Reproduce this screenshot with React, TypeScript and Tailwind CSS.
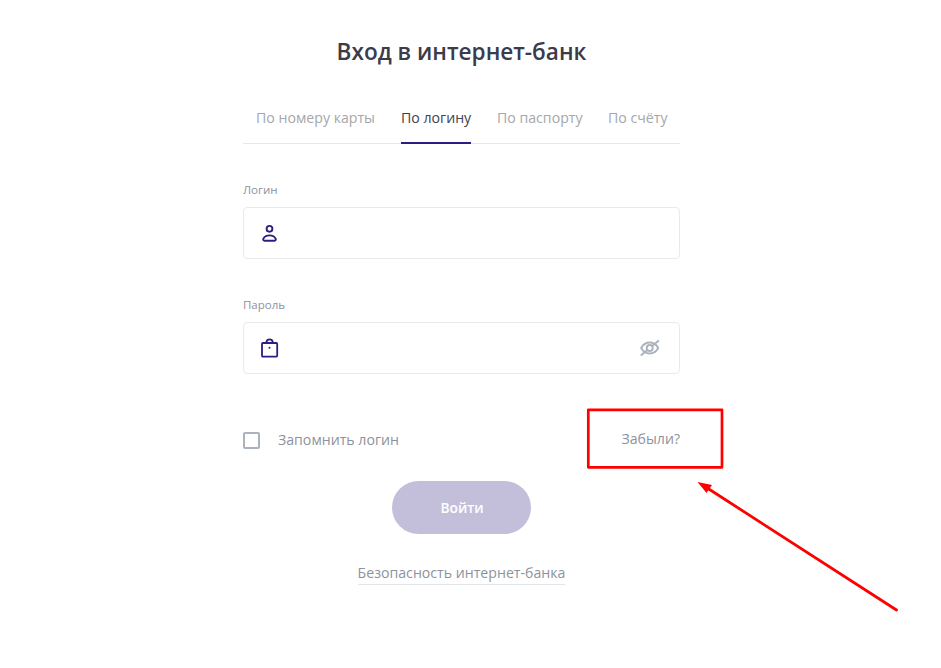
const tabs = [
  { label: "По номеру карты", width: "w-[119px]", active: false },
  { label: "По логину", width: "w-[70px]", active: true },
  { label: "По паспорту", width: "w-[85px]", active: false },
  { label: "По счёту", width: "w-[60px]", active: false },
];

function UserIcon() {
  return (
    <svg width="18" height="20" viewBox="0 0 18 20" fill="none" stroke="#2f1c80" strokeWidth="1.9">
      <circle cx="8.500" cy="5.800" r="2.900" />
      <path d="M3.600 17.700h9.800c1.300 0 1.700-.9 1.200-2-.9-2-3.200-3.300-6.100-3.300s-5.200 1.300-6.100 3.300c-.5 1.100-.1 2 1.200 2Z" strokeLinejoin="round" />
    </svg>
  );
}

function BagIcon() {
  return (
    <svg width="18" height="20" viewBox="0 0 18 20" fill="none" stroke="#2f1c80" strokeWidth="1.8">
      <rect x="1" y="5" width="15.200" height="13.700" rx="0.9" />
      <path d="M5.500 5V3.800C5.800 2.100 7 1.300 8.600 1.300s2.800.8 3.100 2.500V5" />
      <circle cx="8.500" cy="9.700" r="1" fill="#2f1c80" stroke="none" />
    </svg>
  );
}

function EyeIcon() {
  return (
    <svg width="20" height="18" viewBox="0 0 20 18" fill="none" stroke="#aab3bd" strokeWidth="1.9">
      <path d="M1.200 9C3 5.700 6 3.500 9.700 3.500S16.400 5.700 18.200 9c-1.800 3.300-4.800 5.500-8.500 5.500S3 12.300 1.200 9Z" />
      <circle cx="9.700" cy="9" r="3" />
      <path d="M.8 16.500 7.600 10.800M11.900 7.200 18.800 1.400" />
    </svg>
  );
}

export default function App() {
  return (
    <div className="relative h-[668px] w-[941px] overflow-hidden bg-white font-['Open_Sans',sans-serif] text-[#8d939c]">
      <main className="ml-[243px] flex w-[437px] flex-col pt-[36px]">
        <h1 className="text-center text-[22.600px] leading-8 font-semibold whitespace-nowrap text-[#3b3b49]">Вход в интернет-банк</h1>
        <nav className="mt-[32px] flex h-[44px] gap-[26px] border-b border-[#e7e8ec] pl-[13px] text-[14.150px] leading-9">
          {tabs.map((t) => (
            <span key={t.label} className={`${t.width} shrink-0 whitespace-nowrap ${t.active ? "h-[44px] border-b-2 border-[#2f1c80] text-[#41414d]" : "text-[#a5a7ab]"}`}>{t.label}</span>
          ))}
        </nav>
        <label className="mt-[38px] text-[11.500px] leading-4">Логин</label>
        <div className="mt-[9px] flex h-[52px] items-center rounded-[4px] border border-[#e9eaed] pl-[17px]"><UserIcon /></div>
        <label className="mt-[38px] text-[11.500px] leading-4">Пароль</label>
        <div className="mt-[9px] flex h-[52px] items-center justify-between rounded-[4px] border border-[#e9eaed] pr-[19px] pl-[17px]"><BagIcon /><EyeIcon /></div>
        <div className="mt-[54px] flex h-[24px] items-center text-[14.150px]">
          <span className="h-[17px] w-[17px] rounded-[2px] border-2 border-[#aab3bd]" />
          <span className="ml-[18px]">Запомнить логин</span>
          <span className="mb-[2px] ml-auto">Забыли?</span>
        </div>
        <button className="mt-[29px] h-[53px] w-[139px] self-center rounded-full bg-[#c3bfdb] pt-[2px] pl-[1px] text-[13.700px] font-semibold text-white">Войти</button>
        <a className="mt-[27px] h-[24px] self-center border-b border-[#e2e4e8] text-[14.150px] leading-6 whitespace-nowrap">Безопасность интернет-банка</a>
      </main>
      <svg className="pointer-events-none absolute inset-0" width="941" height="668" fill="none" stroke="#ff0000">
        <rect x="588.300" y="409.800" width="133.700" height="57.500" strokeWidth="2.700" strokeLinejoin="round" />
        <path d="M896.500 610 708 488.500" strokeWidth="2.800" strokeLinecap="round" />
        <path d="M697.500 482 712 485 706.500 493Z" fill="#ff0000" stroke="none" />
      </svg>
    </div>
  );
}
